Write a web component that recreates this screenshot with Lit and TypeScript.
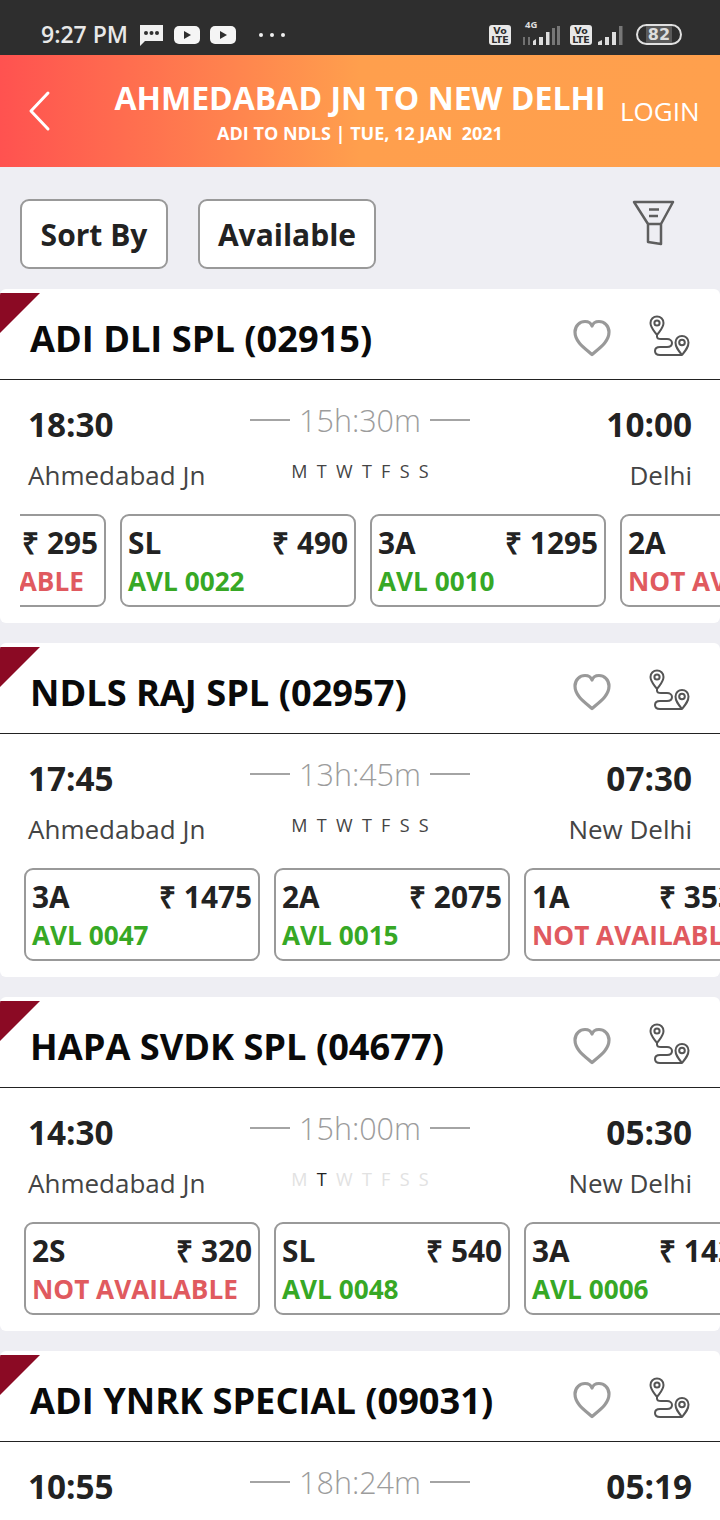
import { LitElement, html, css, svg } from "lit";
import { customElement } from "lit/decorators.js";
import { classMap } from "lit/directives/class-map.js";

interface Fare { cls: string; price: string; status: string; avail: boolean; }
interface Train { name: string; dep: string; arr: string; dur: string; from: string; to: string; fares: Fare[]; offset?: number; faded?: boolean; }

const f = (cls: string, price: string, status: string): Fare => ({ cls, price, status, avail: status !== "NOT AVAILABLE" });

const TRAINS: Train[] = [
  { name: "ADI DLI SPL (02915)", dep: "18:30", arr: "10:00", dur: "15h:30m", from: "Ahmedabad Jn", to: "Delhi", offset: -154,
    fares: [f("2S", "₹ 295", "NOT AVAILABLE"), f("SL", "₹ 490", "AVL 0022"), f("3A", "₹ 1295", "AVL 0010"), f("2A", "₹ 1875", "NOT AVAILABLE")] },
  { name: "NDLS RAJ SPL (02957)", dep: "17:45", arr: "07:30", dur: "13h:45m", from: "Ahmedabad Jn", to: "New Delhi",
    fares: [f("3A", "₹ 1475", "AVL 0047"), f("2A", "₹ 2075", "AVL 0015"), f("1A", "₹ 3530", "NOT AVAILABLE")] },
  { name: "HAPA SVDK SPL (04677)", dep: "14:30", arr: "05:30", dur: "15h:00m", from: "Ahmedabad Jn", to: "New Delhi", faded: true,
    fares: [f("2S", "₹ 320", "NOT AVAILABLE"), f("SL", "₹ 540", "AVL 0048"), f("3A", "₹ 1420", "AVL 0006")] },
  { name: "ADI YNRK SPECIAL (09031)", dep: "10:55", arr: "05:19", dur: "18h:24m", from: "Ahmedabad Jn", to: "Yog Nagri Rishikesh",
    fares: [f("SL", "₹ 520", "AVL 0100")] },
];

const DAYS = ["M", "T", "W", "T", "F", "S", "S"];

const heart = svg`<path d="M19 35.500 C13 30 2 23.500 2 13 C2 6.500 7 2.500 12 2.500 C15 2.500 18 4 19 7 C20 4 23 2.500 26 2.500 C31 2.500 36 6.500 36 13 C36 23.500 25 30 19 35.500 Z" fill="none" stroke="#999" stroke-width="3.200" stroke-linejoin="round"/>`;

const route = svg`<g fill="none" stroke="#555" stroke-width="2">
  <path d="M8 20 C4.500 15 1.500 12.500 1.500 8 C1.500 4 4.500 1.500 8 1.500 C11.500 1.500 14.500 4 14.500 8 C14.500 12.500 11.500 15 8 20 Z" stroke-linejoin="round"/>
  <circle cx="8" cy="8" r="2.600"/>
  <path d="M33 40 C29 35 26.500 32 26.500 27.500 C26.500 23.500 29.500 21 33 21 C36.500 21 39.500 23.500 39.500 27.500 C39.500 32 37 35 33 40 Z" stroke-linejoin="round"/>
  <circle cx="33" cy="27.500" r="2.800"/>
  <path d="M8 20 L8 21.500 C8 23.500 10 24 12 24 L18 24 C21 24 23 26 23 28 C23 30.500 21 32 18 32 L11 32 C7.500 32 6 34 6 36 C6 38.500 8 40 11 40 L33 40"/>
</g>`;

@customElement("train-card")
export class TrainCard extends LitElement {
  static properties = { train: { attribute: false } };
  train!: Train;
  static styles = css`
    :host { display: block; }
    .card { position: relative; background: #fff; border-radius: 6px; height: 334px; overflow: hidden; }
    .flag { position: absolute; left: 0; top: 4px; width: 40px; height: 40px; background: #8b0a24; clip-path: polygon(0 0, 100% 0, 0 100%); }
    .head { height: 91px; box-sizing: border-box; border-bottom: 1px solid #222; display: flex; align-items: center; padding: 18px 29px 10px 30px; }
    .name { flex: 1; font-size: 36.200px; font-weight: 700; color: #0a0a0a; white-space: nowrap; }
    .heart { width: 38px; height: 38px; margin-right: 38px; margin-top: -1px; }
    .route { width: 42px; height: 42px; margin-top: -4px; }
    .times { display: grid; grid-template-columns: minmax(0, 1fr) auto minmax(0, 1fr); padding: 19px 28px 0 28px; height: 134px; box-sizing: border-box; }
    .col-r { text-align: right; }
    .time { font-size: 33.300px; font-weight: 700; color: #222; line-height: 50px; }
    .st { font-size: 26px; color: #444; line-height: 34px; margin-top: 9px; white-space: nowrap; }
    .mid { display: flex; flex-direction: column; align-items: center; margin-top: -1px; }
    .dur { display: flex; align-items: center; gap: 9px; font-size: 30.500px; font-weight: 300; color: #9c9c9c; line-height: 44px; }
    .line { width: 40px; height: 2px; background: #a4a4a4; }
    .days { display: flex; gap: 9.300px; font-size: 18px; color: #444; line-height: 24px; margin-top: 17px; }
    .days .off { color: #e2e2e2; }
    .days .on { color: #222; }
    .rail { margin-left: 20px; padding-left: 4px; overflow: hidden; }
    .track { display: flex; gap: 14px; width: max-content; }
    .fare { width: 236px; height: 93px; box-sizing: border-box; border: 2px solid #999; border-radius: 9px; padding: 6px 6px 0 6px; background: #fff; }
    .row { display: flex; justify-content: space-between; font-size: 29.800px; font-weight: 700; color: #222; line-height: 42px; white-space: nowrap; }
    .status { font-size: 26.200px; font-weight: 700; line-height: 34px; white-space: nowrap; }
    .ok { color: #37a825; }
    .no { color: #e05a5f; }
  `;
  render() {
    const t = this.train;
    return html`<div class="card">
      <div class="flag"></div>
      <div class="head">
        <div class="name">${t.name}</div>
        <svg class="heart" viewBox="0 0 38 38">${heart}</svg>
        <svg class="route" viewBox="0 0 42 42">${route}</svg>
      </div>
      <div class="times">
        <div><div class="time">${t.dep}</div><div class="st">${t.from}</div></div>
        <div class="mid">
          <div class="dur"><span class="line"></span>${t.dur}<span class="line"></span></div>
          <div class="days">${DAYS.map((d, i) => html`<span class=${classMap({ off: !!t.faded && i !== 1, on: !!t.faded && i === 1 })}>${d}</span>`)}</div>
        </div>
        <div class="col-r"><div class="time">${t.arr}</div><div class="st">${t.to}</div></div>
      </div>
      <div class="rail">
        <div class="track" style=${t.offset ? `margin-left:${t.offset}px` : ""}>
          ${t.fares.map((x) => html`<div class="fare">
            <div class="row"><span>${x.cls}</span><span>${x.price}</span></div>
            <div class="status ${x.avail ? "ok" : "no"}">${x.status}</div>
          </div>`)}
        </div>
      </div>
    </div>`;
  }
}

@customElement("app-root")
export class AppRoot extends LitElement {
  static styles = css`
    :host { display: block; width: 720px; height: 1520px; overflow: hidden; background: #eeeef3; font-family: "Open Sans", sans-serif; }
    .status { height: 55px; background: #2e2e2e; display: flex; align-items: center; padding: 14px 38px 0 41px; box-sizing: border-box; color: #e8e8e8; }
    .clock { font-size: 23px; font-weight: 600; margin-right: 11px; margin-top: -1px; white-space: nowrap; }
    .spacer { flex: 1; }
    .si { display: block; flex: none; }
    .volte { width: 22px; height: 20px; background: #e8e8e8; border-radius: 3px; color: #2e2e2e; font-size: 9.500px; font-weight: 700; line-height: 9px; text-align: center; padding-top: 1px; box-sizing: border-box; flex: none; font-family: "DejaVu Sans", sans-serif; }
    .net { position: relative; width: 38px; height: 20px; margin-left: 11px; flex: none; }
    .fourg { position: absolute; left: 3px; top: -5px; font-size: 9.500px; font-weight: 700; line-height: 10px; color: #ddd; }
    .bat { width: 46px; height: 21px; margin-left: 11px; border: 2px solid #e0e0e0; border-radius: 11px; box-sizing: border-box; display: flex; align-items: center; justify-content: center; font-size: 16px; font-weight: 700; color: #ddd; line-height: 17px; flex: none; font-family: "DejaVu Sans", sans-serif; background: linear-gradient(90deg, transparent 0 8px, #5a5a5a 8px 34px, transparent 34px); background-clip: padding-box; }
    .header { height: 112px; background: linear-gradient(90deg, #ff5250 0%, #ff9f4d 50%, #ffa04d 100%); color: #fff; display: grid; grid-template-columns: 100px 1fr 100px; align-items: center; }
    .back { margin-left: 26px; }
    .title { text-align: center; white-space: nowrap; margin-top: -1px; }
    .t1 { font-size: 32px; font-weight: 700; line-height: 44px; }
    .t2 { font-size: 18px; font-weight: 700; line-height: 26px; white-space: pre; }
    .login { font-size: 26px; text-align: right; padding-right: 21px; margin-top: -1px; }
    .filters { height: 122px; box-sizing: border-box; display: flex; align-items: flex-start; padding: 32px 0 0 20px; gap: 30px; position: relative; }
    .btn { height: 70px; box-sizing: border-box; border: 2px solid #999; border-radius: 9px; background: #fff; color: #222; font-size: 30px; font-weight: 700; display: flex; align-items: center; justify-content: center; }
    .sort { width: 148px; }
    .avail { width: 178px; }
    .funnel { margin-left: auto; margin-right: 44px; margin-top: 1px; }
    .list { display: flex; flex-direction: column; gap: 20px; }
  `;
  render() {
    return html`
      <div class="status">
        <span class="clock">9:27 PM</span>
        <svg class="si" width="24" height="22" viewBox="0 0 24 22"><path d="M1 1 H24 V17 H6 L1 22 Z" fill="#f0f0f0"/><circle cx="7" cy="9" r="2" fill="#2e2e2e"/><circle cx="12.500" cy="9" r="2" fill="#2e2e2e"/><circle cx="18" cy="9" r="2" fill="#2e2e2e"/></svg>
        <svg class="si" style="margin-left:11px" width="26" height="18" viewBox="0 0 26 18"><rect width="26" height="18" rx="5" fill="#f5f5f5"/><path d="M10 5 L17 9 L10 13 Z" fill="#2e2e2e"/></svg>
        <svg class="si" style="margin-left:10px" width="26" height="18" viewBox="0 0 26 18"><rect width="26" height="18" rx="5" fill="#f5f5f5"/><path d="M10 5 L17 9 L10 13 Z" fill="#2e2e2e"/></svg>
        <svg class="si" style="margin-left:22px" width="28" height="6" viewBox="0 0 28 6"><circle cx="3" cy="3" r="2" fill="#f0f0f0"/><circle cx="14" cy="3" r="2" fill="#f0f0f0"/><circle cx="25" cy="3" r="2" fill="#f0f0f0"/></svg>
        <span class="spacer"></span>
        <div class="volte">Vo<br />LTE</div>
        <div class="net">
          <span class="fourg">4G</span>
          <svg class="si" width="38" height="20" viewBox="0 0 38 20">
            <path d="M2 12 V20 M7 12 V20" stroke="#888" stroke-width="1.500"/>
            <path d="M11 20 V16 L14 14 V20 Z" fill="#ddd"/><rect x="17" y="12" width="4" height="8" fill="#ddd"/><rect x="24" y="7" width="3.500" height="13" fill="#ddd"/><rect x="30" y="3" width="3" height="17" fill="#777"/><rect x="35" y="1" width="3" height="19" fill="#777"/>
          </svg>
        </div>
        <div class="volte" style="margin-left:10px">Vo<br />LTE</div>
        <svg class="si" style="margin-left:5px" width="28" height="20" viewBox="0 0 28 20"><path d="M1 20 V17 L5 15 V20 Z" fill="#ddd"/><rect x="8" y="12" width="4" height="8" fill="#ddd"/><rect x="15" y="7" width="4" height="13" fill="#ddd"/><rect x="22" y="1" width="3.500" height="19" fill="#777"/></svg>
        <div class="bat">82</div>
      </div>
      <div class="header">
        <svg class="back" width="28" height="42" viewBox="0 0 28 42"><path d="M22 3 L5 21 L22 39" fill="none" stroke="#fff" stroke-width="3" stroke-linecap="round" stroke-linejoin="round"/></svg>
        <div class="title">
          <div class="t1">AHMEDABAD JN TO NEW DELHI</div>
          <div class="t2">ADI TO NDLS | TUE, 12 JAN  2021</div>
        </div>
        <div class="login">LOGIN</div>
      </div>
      <div class="filters">
        <div class="btn sort">Sort By</div>
        <div class="btn avail">Available</div>
        <svg class="funnel" width="44" height="46" viewBox="0 0 44 46">
          <g fill="none" stroke="#5e5e5e" stroke-width="2.500" stroke-linejoin="round">
            <path d="M2 2 H41 L29 24 V44 L16 42 V24 Z"/>
            <path d="M16 24 H29"/>
            <path d="M17 9.500 H27 M17 16 H26"/>
          </g>
        </svg>
      </div>
      <div class="list">
        ${TRAINS.map((t) => html`<train-card .train=${t}></train-card>`)}
      </div>
    `;
  }
}
